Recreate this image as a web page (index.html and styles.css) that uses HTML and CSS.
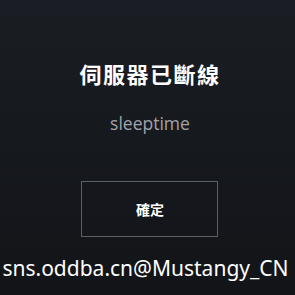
FILE: index.html
```html
<!DOCTYPE html>
<html>
<head>
<meta charset="utf-8">
<link rel="stylesheet" href="styles.css">
</head>
<body>
<div class="screen">
  <div class="dialog">
    <h1 class="title">伺服器已斷線</h1>
    <p class="name">sleeptime</p>
    <button class="ok">確定</button>
  </div>
  <div class="mark">sns.oddba.cn@Mustangy_CN</div>
</div>
</body>
</html>
```
FILE: styles.css
```css
html, body {
  margin: 0;
  padding: 0;
  width: 295px;
  height: 295px;
  overflow: hidden;
}
.screen {
  width: 295px;
  height: 295px;
  background: linear-gradient(180deg, #1a1d23 0%, #16191e 45%, #121418 100%);
  display: flex;
  flex-direction: column;
  align-items: center;
  font-family: "Noto Sans", "Noto Sans CJK TC", sans-serif;
}
.dialog {
  display: flex;
  flex-direction: column;
  align-items: center;
  padding-top: 58px;
  padding-left: 5px;
}
.title {
  margin: 0;
  font-family: "Noto Sans CJK TC", sans-serif;
  font-weight: 700;
  font-size: 22px;
  line-height: 30px;
  color: #ffffff;
  letter-spacing: 1.5px;
}
.name {
  margin: 24px 0 0;
  font-family: "Open Sans", sans-serif;
  font-size: 17.5px;
  line-height: 22px;
  color: #a2a4a8;
}
.ok {
  margin-top: 47px;
  width: 137px;
  height: 56px;
  background: transparent;
  border: 1px solid #5c5f65;
  color: #ffffff;
  font-family: "Noto Sans CJK TC", sans-serif;
  font-weight: 700;
  font-size: 14px;
  padding: 0;
}
.mark {
  margin-top: 17px;
  padding-right: 4px;
  font-family: "Noto Sans", sans-serif;
  font-size: 21px;
  line-height: 28px;
  color: #ffffff;
}
```
